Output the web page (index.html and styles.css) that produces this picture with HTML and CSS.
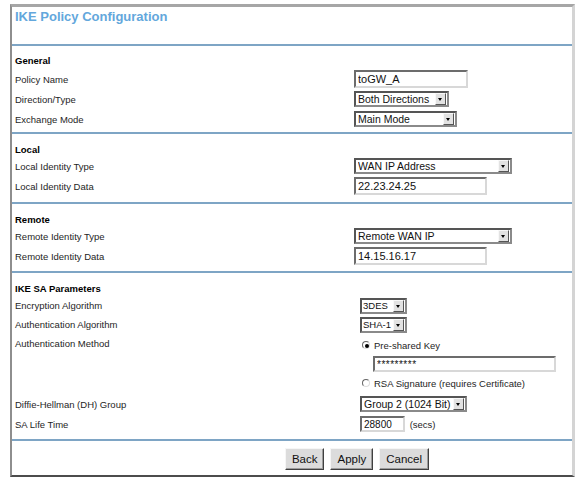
FILE: index.html
```html
<!DOCTYPE html>
<html>
<head>
	<title>IKE Policy Configuration</title>
	<meta charset="utf-8">
	<link rel="stylesheet" href="styles.css">
</head>

<body>
	<div class="frame">
		<div class="title">IKE Policy Configuration</div>

		<!-- general -->
		<div class="sect general">
			<div class="head">General</div>
			<div class="row h20"><label>Policy Name</label><span><input class="txt w-name" type="text" value="toGW_A"></span></div>
			<div class="row h20"><label>Direction/Type</label>
				<span class="sel w-dir"><select><option>Both Directions</option><option>Initiator</option><option>Responder</option></select><i class="arr"></i></span>
			</div>
			<div class="row h20"><label>Exchange Mode</label>
				<span class="sel w-mode"><select><option>Main Mode</option><option>Aggressive Mode</option></select><i class="arr"></i></span>
			</div>
		</div>

		<!-- local -->
		<div class="sect local">
			<div class="head">Local</div>
			<div class="row h18"><label>Local Identity Type</label>
				<span class="sel w-wan"><select><option>WAN IP Address</option><option>Fully Qualified Domain Name</option></select><i class="arr"></i></span>
			</div>
			<div class="row h22"><label>Local Identity Data</label><span><input class="txt w-ip" type="text" value="22.23.24.25"></span></div>
		</div>

		<!-- remote -->
		<div class="sect remote">
			<div class="head">Remote</div>
			<div class="row h18"><label>Remote Identity Type</label>
				<span class="sel w-wan"><select><option>Remote WAN IP</option><option>Fully Qualified Domain Name</option></select><i class="arr"></i></span>
			</div>
			<div class="row h22"><label>Remote Identity Data</label><span><input class="txt w-ip" type="text" value="14.15.16.17"></span></div>
		</div>

		<!-- ike sa -->
		<div class="sect ike">
			<div class="head">IKE SA Parameters</div>
			<div class="row h19"><label>Encryption Algorithm</label>
				<span class="sel w-enc"><select><option>3DES</option><option>DES</option></select><i class="arr"></i></span>
			</div>
			<div class="row h19"><label>Authentication Algorithm</label>
				<span class="sel w-enc"><select><option>SHA-1</option><option>MD5</option></select><i class="arr"></i></span>
			</div>
			<div class="row method"><label>Authentication Method</label>
				<div class="opts">
					<label class="opt"><input type="radio" name="auth" checked> Pre-shared Key</label>
					<input class="txt w-key" type="text" value="*********">
					<label class="opt"><input type="radio" name="auth"> RSA Signature (requires Certificate)</label>
				</div>
			</div>
			<div class="row h20"><label>Diffie-Hellman (DH) Group</label>
				<span class="sel w-grp"><select><option>Group 2 (1024 Bit)</option><option>Group 1 (768 Bit)</option></select><i class="arr"></i></span>
			</div>
			<div class="row h20"><label>SA Life Time</label><span><input class="txt w-life" type="text" value="28800"> <span class="unit">(secs)</span></span></div>
		</div>

		<div class="sect btns">
			<button>Back</button>
			<button>Apply</button>
			<button>Cancel</button>
		</div>
	</div>
</body>
</html>
```

FILE: styles.css
```css
body{
	margin: 0;
	padding: 4px 0 0 10px;
	background: #fff;
	color: #1e1e1e;
	font-family: "Liberation Sans", Arial, sans-serif;
}

.frame{
	box-sizing: border-box;
	width: 565px;
	height: 473px;
	border-style: solid;
	border-width: 3px 3px 2px 2px;
	border-color: #a6a6a6 #d4d4d4 #4c4c4c #8e8e8e;
}

.title{
	height: 37px;
	box-sizing: border-box;
	padding: 2px 0 0 3px;
	font-size: 13px;
	line-height: 15px;
	font-weight: bold;
	color: #63a7dc;
}

.sect{
	border-top: 2px solid #7ea5c5;
}

.head{
	padding-left: 3px;
	height: 15px;
	font-size: 9.5px;
	line-height: 15px;
	font-weight: bold;
	color: #000;
}

.row{
	display: grid;
	grid-template-columns: 342px auto;
	align-items: center;
	font-size: 9.5px;
}

.row > label{
	padding-left: 3px;
}

.h18{ height: 18px; }
.h19{ height: 19px; }
.h20{ height: 20px; }
.h22{ height: 22px; }

.general{ height: 88px; box-sizing: border-box; padding-top: 7px; }
.general .head{ height: 16px; line-height: 16px; }
.local{ height: 70px; box-sizing: border-box; padding-top: 8px; }
.remote{ height: 69px; box-sizing: border-box; padding-top: 8px; }
.ike{ height: 168px; box-sizing: border-box; padding-top: 8px; }
.ike .row{ grid-template-columns: 348px auto; }

/* text boxes */
.txt{
	box-sizing: border-box;
	height: 18px;
	margin: 0;
	padding: 0 2px;
	border: 2px solid;
	border-color: #6c6c6c #d8d8d8 #d8d8d8 #6c6c6c;
	font-family: "Liberation Sans", Arial, sans-serif;
	font-size: 11px;
	color: #111;
	outline: none;
}

.w-name{ width: 114px; }
.w-ip{ width: 133px; }
.w-life{ width: 45px; height: 16px; font-size: 10px; }
.w-key{ width: 183px; height: 16px; margin-left: 13px; font-size: 10px; letter-spacing: 0.5px; }

.unit{
	margin-left: 2px;
	font-size: 9.5px;
}

/* drop downs */
.sel{
	position: relative;
	display: inline-block;
	box-sizing: border-box;
	height: 16px;
	border: 2px solid;
	border-color: #555 #8a8a8a #8a8a8a #555;
	background: #fff;
}

.sel select{
	-webkit-appearance: none;
	appearance: none;
	display: block;
	width: 100%;
	height: 12px;
	margin: 0;
	padding: 0 0 0 2px;
	border: none;
	background: transparent;
	font-family: "Liberation Sans", Arial, sans-serif;
	font-size: 10.5px;
	line-height: 12px;
	color: #111;
	outline: none;
}

.sel .arr{
	position: absolute;
	right: 1px;
	top: 0;
	width: 11px;
	height: 12px;
	box-sizing: border-box;
	border: 1px solid;
	border-color: #f8f8f8 #555 #555 #f8f8f8;
	background: #e2e2e2;
}

.sel .arr::after{
	content: "";
	position: absolute;
	left: 2px;
	top: 4px;
	border-left: 2.5px solid transparent;
	border-right: 2.5px solid transparent;
	border-top: 3px solid #000;
}

.w-dir{ width: 95px; }
.w-mode{ width: 103px; }
.w-wan{ width: 158px; }
.w-enc{ width: 47px; }
.w-enc select{ font-size: 9.5px; padding-left: 1px; }
.w-grp{ width: 107px; }

/* radio group */
.method{
	align-items: start;
}

.method > label{
	padding-top: 4px;
}

.opts{
	display: flex;
	flex-direction: column;
}

.opt{
	display: flex;
	align-items: center;
	height: 22px;
	padding-left: 2px;
}

.opt input{
	-webkit-appearance: none;
	appearance: none;
	width: 8px;
	height: 8px;
	margin: 0 4px 0 0;
	border: 1px solid;
	border-color: #666 #ddd #ddd #666;
	border-radius: 50%;
	background: #fff;
	position: relative;
}

.opt input:checked::after{
	content: "";
	position: absolute;
	left: 2px;
	top: 2px;
	width: 4px;
	height: 4px;
	border-radius: 50%;
	background: #000;
}

/* buttons */
.btns{
	display: flex;
	justify-content: center;
	padding: 7px 0 0 130px;
}

.btns button{
	height: 22px;
	margin: 0 3px;
	padding: 0 6px;
	background: #dcdcdc;
	border: 1px solid;
	border-color: #f6f6f6 #404040 #404040 #f6f6f6;
	box-shadow: inset -1px -1px #9c9c9c;
	font-family: "Liberation Sans", Arial, sans-serif;
	font-size: 11.5px;
	color: #111;
}
```
